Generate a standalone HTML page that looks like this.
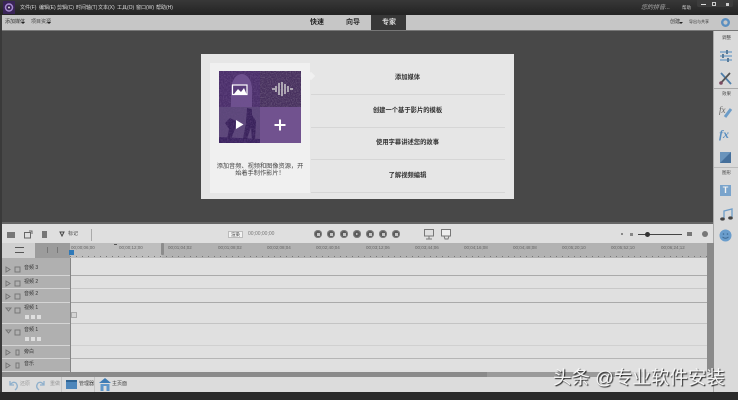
<!DOCTYPE html>
<html lang="zh-CN"><head><meta charset="utf-8"><title>Premiere Elements</title>
<style>
*{margin:0;padding:0;box-sizing:border-box}
html,body{width:738px;height:400px;overflow:hidden;background:#2a2a2a}
body{position:relative;font-family:"Liberation Sans","Noto Sans CJK SC",sans-serif}
.a{position:absolute}
svg.a{filter:blur(.35px)}
.t{position:absolute;white-space:nowrap;line-height:1;filter:blur(.35px)}
.m{font-size:5px;color:#ddd;top:6px}
.tl{font-size:5px;color:#333;left:24px}
.ru{font-size:4.5px;color:#666;top:246px}
.row{position:absolute;left:2px;width:68px;background:#b0b0b0;border-bottom:1px solid #d5d5d5}
.line{position:absolute;left:71px;width:636px;height:1px;background:#bdbdbd}
.b{position:absolute;top:230px;width:8px;height:8px;border-radius:50%;background:#5a5a5a;box-shadow:inset 0 0 0 1px #808080;filter:blur(.3px)}
.b i{position:absolute;left:2.5px;top:2.5px;width:3px;height:3px;background:#c8c8c8}
.item{position:absolute;left:310px;width:195px;text-align:center;font-size:6.3px;color:#333;font-weight:bold;filter:blur(.35px);line-height:1}
.sep{position:absolute;left:311px;width:194px;height:1px;background:#d6d6d6}
.mini{position:absolute;width:4px;height:4px;background:#dedede;filter:blur(.3px)}
</style></head><body>
<div class="a" style="left:0;top:0;width:738px;height:15px;background:linear-gradient(#383838,#232323)"></div>
<svg class="a" style="left:3px;top:1px" width="12" height="13" viewBox="0 0 12 13"><rect width="12" height="13" fill="#3a2458"/><circle cx="6" cy="6.500" r="3.500" fill="none" stroke="#a78ad0" stroke-width="1.500"/><circle cx="6" cy="6.500" r="1" fill="#ddd"/></svg>
<span class="t m" style="left:20px">文件(F)</span><span class="t m" style="left:39px">编辑(E)</span><span class="t m" style="left:57px">剪辑(C)</span><span class="t m" style="left:76px">时间轴(T)</span><span class="t m" style="left:98px">文本(X)</span><span class="t m" style="left:117px">工具(O)</span><span class="t m" style="left:136px">窗口(W)</span><span class="t m" style="left:156px">帮助(H)</span>
<span class="t" style="left:641px;top:5px;font-size:6px;font-style:italic;color:#aaa">您的拼音...</span>
<span class="t" style="left:682px;top:6px;font-size:4.500px;color:#ccc">帮助</span>
<div class="a" style="left:697px;top:0;width:36px;height:7px;background:#3c3c3c;border-radius:0 0 2px 2px"></div>
<div class="a" style="left:701px;top:4px;width:5px;height:1px;background:#ddd"></div>
<div class="a" style="left:712px;top:2px;width:4px;height:4px;border:1px solid #ccc"></div>
<div class="a" style="left:726px;top:3px;width:3px;height:3px;background:#ccc"></div>

<div class="a" style="left:2px;top:15px;width:736px;height:15px;background:#c6c6c6"></div>
<div class="a" style="left:0;top:30px;width:738px;height:1px;background:#777"></div>
<span class="t" style="left:5px;top:20px;font-size:5px;color:#333">添加媒体</span>
<div class="a" style="left:21px;top:22px;border:2px solid transparent;border-top:2px solid #222"></div>
<span class="t" style="left:31px;top:20px;font-size:5px;color:#444">项目资源</span>
<div class="a" style="left:47px;top:22px;border:2px solid transparent;border-top:2px solid #222"></div>
<span class="t" style="left:310px;top:19px;font-size:7px;font-weight:bold;color:#222">快速</span>
<span class="t" style="left:346px;top:19px;font-size:7px;font-weight:bold;color:#333">向导</span>
<div class="a" style="left:371px;top:15px;width:35px;height:15px;background:#383838"></div>
<span class="t" style="left:382px;top:19px;font-size:7px;font-weight:bold;color:#ddd">专家</span>
<span class="t" style="left:670px;top:20px;font-size:5px;color:#333">创建</span>
<div class="a" style="left:679px;top:22px;border:2px solid transparent;border-top:2px solid #222"></div>
<span class="t" style="left:689px;top:20px;font-size:4px;color:#333">导出与共享</span>
<svg class="a" style="left:720px;top:17px" width="11" height="11" viewBox="0 0 11 11"><circle cx="5.500" cy="5.500" r="3.300" fill="none" stroke="#5b8fc0" stroke-width="2.400"/></svg>

<div class="a" style="left:2px;top:31px;width:712px;height:191px;background:#484848"></div>
<div class="a" style="left:0;top:15px;width:2px;height:377px;background:#3a3a3a"></div>

<!-- dialog -->
<div class="a" style="left:201px;top:54px;width:313px;height:145px;background:#e6e6e6"></div>
<div class="a" style="left:210px;top:63px;width:100px;height:130px;background:#f0f0f0"></div>
<div class="a" style="left:308px;top:73px;width:6px;height:6px;background:#f0f0f0;transform:rotate(45deg)"></div>
<svg class="a" style="left:219px;top:71px" width="82" height="72" viewBox="0 0 82 72">
<defs><filter id="n" x="0" y="0" width="100%" height="100%"><feTurbulence type="fractalNoise" baseFrequency=".7" numOctaves="2" seed="4"/><feColorMatrix values="0 0 0 0 .15  0 0 0 0 .08  0 0 0 0 .25  1.400 0 0 0 -.5"/></filter><filter id="n2" x="0" y="0" width="100%" height="100%"><feTurbulence type="fractalNoise" baseFrequency=".8" numOctaves="2" seed="9"/><feColorMatrix values="0 0 0 0 .62  0 0 0 0 .58  0 0 0 0 .62  1.500 0 0 0 -.6"/></filter></defs>
<rect width="41" height="36" fill="#4a2e6a"/>
<path d="M12 36V16Q15 3 23 3Q31 4 33 16V36Z" fill="#6e5090"/>
<rect x="41" width="41" height="36" fill="#47305e"/>
<rect x="41" width="41" height="36" filter="url(#n2)" opacity=".4"/>
<rect y="36" width="41" height="36" fill="#5c477a"/>
<path d="M0 66L41 68V72H0Z" fill="#3b2360"/>
<path d="M6 52L11 47L17 50L16 58L12 68H8L10 58Z" fill="#38215a"/>
<path d="M28 37L33 38L33 44L37 50L36 69H33L32 56L28 68H24L27 52Z" fill="#38215a"/>
<rect width="41" height="36" filter="url(#n)"/>
<rect y="36" width="41" height="36" filter="url(#n)" opacity=".7"/>
<rect x="41" y="36" width="41" height="36" fill="#71528f"/>
<rect x="13.500" y="14" width="14.500" height="9.500" fill="#5a3d7b" stroke="#fff" stroke-width="1.200"/>
<path d="M15 23L19 18L22 21L25 17L27.500 23Z" fill="#fff"/>
<path d="M53 18H56M57 15V21M60 12V24M63 11V25M66 13V23M69 15V21M71 18H74" stroke="#b8b2bc" stroke-width="1.800"/>
<path d="M17 49L24.500 53.500L17 58Z" fill="#fff"/>
<path d="M55.500 54H66.500M61 48.500V59.500" stroke="#fff" stroke-width="2"/>
</svg>
<div class="t" style="left:215px;top:163px;width:90px;text-align:center;font-size:6.200px;line-height:7px;color:#444;white-space:normal">添加音频、视频和图像资源，开始着手制作影片！</div>
<div class="item" style="top:75px">添加媒体</div>
<div class="sep" style="top:94px"></div>
<div class="item" style="top:108px">创建一个基于影片的模板</div>
<div class="sep" style="top:127px"></div>
<div class="item" style="top:140px">使用字幕讲述您的故事</div>
<div class="sep" style="top:159px"></div>
<div class="item" style="top:173px">了解视频编辑</div>
<div class="sep" style="top:192px"></div>

<!-- right panel -->
<div class="a" style="left:713px;top:31px;width:25px;height:361px;background:#dadada;border-left:1px solid #aaa"></div>
<span class="t" style="left:722px;top:36px;font-size:4.500px;color:#444">调整</span>
<svg class="a" style="left:717px;top:49px" width="18" height="14" viewBox="0 0 18 14"><path d="M3 3H15M3 7H15M3 11H15" stroke="#6c9cc8" stroke-width="1.300"/><rect x="9" y="1" width="2" height="4" fill="#5a7d9c"/><rect x="5" y="5" width="2" height="4" fill="#5a7d9c"/><rect x="10" y="9" width="2" height="4" fill="#5a7d9c"/></svg>
<svg class="a" style="left:718px;top:71px" width="15" height="15" viewBox="0 0 15 15"><path d="M3 2L13 13" stroke="#4f7fab" stroke-width="1.800"/><path d="M12 2L2 13" stroke="#555" stroke-width="1.800"/><circle cx="3" cy="12" r="1.800" fill="#7a4a60"/></svg>
<div class="a" style="left:714px;top:88px;width:24px;height:1px;background:#aaa"></div>
<span class="t" style="left:722px;top:92px;font-size:4.500px;color:#444">效果</span>
<svg class="a" style="left:718px;top:102px" width="17" height="17" viewBox="0 0 17 17"><text x="1" y="11" font-size="9" font-style="italic" fill="#666" font-family="Liberation Serif">fx</text><path d="M7 15L13 7" stroke="#6c9cc8" stroke-width="3"/></svg>
<span class="t" style="left:719px;top:128px;font-size:12px;font-style:italic;font-family:'Liberation Serif',serif;color:#5b8fc0;font-weight:bold">fx</span>
<svg class="a" style="left:720px;top:152px" width="11" height="11" viewBox="0 0 11 11"><rect width="11" height="11" fill="#6a94bc"/><path d="M0 11L11 0V11Z" fill="#456f9b"/></svg>
<div class="a" style="left:714px;top:167px;width:24px;height:1px;background:#bbb"></div>
<span class="t" style="left:722px;top:171px;font-size:4.500px;color:#444">图形</span>
<div class="a" style="left:720px;top:185px;width:11px;height:11px;background:#7aa4cc;color:#f2f2f2;font-size:9px;line-height:11px;text-align:center;font-weight:bold;filter:blur(.3px)">T</div>
<svg class="a" style="left:719px;top:207px" width="15" height="15" viewBox="0 0 15 15"><path d="M5 12V4L13 2V10" fill="none" stroke="#6c9cc8" stroke-width="1.300"/><ellipse cx="3.500" cy="12" rx="2.300" ry="1.600" fill="#444"/><ellipse cx="11.500" cy="11" rx="2.300" ry="1.600" fill="#444"/></svg>
<svg class="a" style="left:719px;top:229px" width="13" height="13" viewBox="0 0 13 13"><circle cx="6.500" cy="6.500" r="6" fill="#6a9dcc"/><circle cx="4.500" cy="5" r=".8" fill="#3e6a94"/><circle cx="8.500" cy="5" r=".8" fill="#3e6a94"/><path d="M3.500 8Q6.500 10.500 9.500 8" stroke="#3e6a94" fill="none"/></svg>

<!-- timeline -->
<div class="a" style="left:2px;top:222px;width:711px;height:2px;background:#666"></div>
<div class="a" style="left:2px;top:224px;width:711px;height:19px;background:#dfdfdf"></div>
<svg class="a" style="left:6px;top:229px" width="50" height="10" viewBox="0 0 50 10"><rect x="1" y="3" width="8" height="6" fill="#777"/><rect x="18.500" y="3.500" width="6" height="5.500" fill="none" stroke="#666"/><path d="M23 2H26V5" stroke="#666" fill="none"/><rect x="36" y="2" width="5" height="7" fill="#777"/></svg>
<svg class="a" style="left:59px;top:231px" width="6" height="6" viewBox="0 0 6 6"><path d="M1 1H5L3 5Z" fill="none" stroke="#444"/></svg>
<span class="t" style="left:68px;top:232px;font-size:5px;color:#444">标记</span>
<div class="a" style="left:91px;top:229px;width:1px;height:12px;background:#aaa"></div>
<div class="a" style="left:228px;top:231px;width:15px;height:7px;background:#f3f3f3;border:1px solid #bbb;font-size:4.500px;line-height:5px;text-align:center;color:#333">渲染</div>
<span class="t" style="left:248px;top:232px;font-size:5px;color:#777">00;00;00;00</span>
<div class="b" style="left:314px"><i></i></div><div class="b" style="left:327px"><i></i></div><div class="b" style="left:340px"><i></i></div><div class="b" style="left:353px"><i style="clip-path:polygon(0 0,100% 50%,0 100%)"></i></div><div class="b" style="left:366px"><i></i></div><div class="b" style="left:379px"><i></i></div><div class="b" style="left:392px"><i></i></div>
<svg class="a" style="left:424px;top:229px" width="28" height="11" viewBox="0 0 28 11" fill="none" stroke="#777"><rect x=".5" y=".5" width="9" height="6.500"/><path d="M5 7V10M2 10H8"/><rect x="17.500" y=".5" width="9" height="6.500" fill="#eee"/><path d="M20 7L21 10H24L25 7"/></svg>
<div class="a" style="left:621px;top:233px;width:2px;height:2px;background:#888"></div>
<div class="a" style="left:630px;top:233px;width:3px;height:3px;background:#888"></div>
<div class="a" style="left:638px;top:234px;width:44px;height:1px;background:#444"></div>
<div class="a" style="left:645px;top:232px;width:5px;height:5px;border-radius:50%;background:#333"></div>
<div class="a" style="left:687px;top:232px;width:5px;height:4px;background:#777"></div>
<div class="a" style="left:702px;top:231px;width:6px;height:6px;border-radius:50%;background:#777"></div>

<div class="a" style="left:2px;top:243px;width:33px;height:15px;background:#d0d0d0"></div>
<div class="a" style="left:35px;top:243px;width:35px;height:15px;background:#9c9c9c"></div>
<div class="a" style="left:15px;top:247px;width:9px;height:6px;border-top:1px solid #555;border-bottom:1px solid #555"></div>
<div class="a" style="left:47px;top:247px;width:11px;height:6px;border-left:1px solid #777;border-right:1px solid #777"></div>
<div class="a" style="left:70px;top:243px;width:637px;height:15px;background:#b2b2b2"></div>
<div class="a" style="left:70px;top:243px;width:92px;height:15px;background:#bebebe"></div>
<div class="a" style="left:161px;top:243px;width:3px;height:12px;background:#8c8c8c;border-radius:1px"></div>
<div class="a" style="left:114px;top:244px;width:3px;height:1px;background:#555"></div>
<div class="a" style="left:70px;top:256px;width:637px;height:1px;background:repeating-linear-gradient(90deg,#777 0 1px,transparent 1px 6px)"></div>
<div class="a" style="left:69px;top:250px;width:5px;height:5px;background:#2f79b8"></div>
<span class="t ru" style="left:71px">00;00;06;00</span><span class="t ru" style="left:119px">00;00;12;00</span><span class="t ru" style="left:168px">00;01;04;02</span><span class="t ru" style="left:218px">00;01;08;02</span><span class="t ru" style="left:267px">00;02;08;04</span><span class="t ru" style="left:316px">00;02;40;04</span><span class="t ru" style="left:366px">00;03;12;06</span><span class="t ru" style="left:415px">00;03;44;06</span><span class="t ru" style="left:464px">00;04;16;08</span><span class="t ru" style="left:513px">00;04;48;08</span><span class="t ru" style="left:562px">00;05;20;10</span><span class="t ru" style="left:611px">00;05;52;10</span><span class="t ru" style="left:661px">00;06;24;12</span>

<div class="a" style="left:70px;top:258px;width:637px;height:114px;background:#e0e0e0"></div>
<div class="a" style="left:69px;top:258px;width:2px;height:114px;background:#858585"></div>
<div class="line" style="top:275px;background:#aaa"></div><div class="line" style="top:288px;background:#c8c8c8"></div><div class="line" style="top:302px;background:#aaa"></div><div class="line" style="top:323px;background:#c4c4c4"></div><div class="line" style="top:345px;background:#d0d0d0"></div><div class="line" style="top:358px;background:#b5b5b5"></div>
<div class="row" style="top:258px;height:18px"></div><div class="row" style="top:276px;height:13px"></div><div class="row" style="top:289px;height:14px"></div><div class="row" style="top:303px;height:21px"></div><div class="row" style="top:324px;height:22px"></div><div class="row" style="top:346px;height:13px"></div><div class="row" style="top:359px;height:13px"></div>
<span class="t tl" style="top:266px">音频 3</span><span class="t tl" style="top:280px">视频 2</span><span class="t tl" style="top:292px">音频 2</span><span class="t tl" style="top:306px">视频 1</span><span class="t tl" style="top:328px">音频 1</span><span class="t tl" style="top:350px">旁白</span><span class="t tl" style="top:362px">音乐</span>
<svg class="a" style="left:4px;top:264px" width="18" height="106" viewBox="0 0 18 106" fill="none" stroke="#777"><path d="M2 3L6 5.500L2 8ZM2 17L6 19.500L2 22ZM2 30L6 32.500L2 35ZM2 44H7L4.500 47ZM2 66H7L4.500 69ZM2 86L6 88.500L2 91ZM2 99L6 101.500L2 104Z"/><path d="M11 3H16V8H11ZM11 17H16V22H11ZM11 30H16V35H11ZM11 44H16V49H11ZM11 66H16V71H11ZM12 86H15V91H12ZM12 99H15V104H12Z"/></svg>
<div class="mini" style="left:25px;top:315px"></div><div class="mini" style="left:31px;top:315px"></div><div class="mini" style="left:37px;top:315px"></div><div class="mini" style="left:25px;top:337px"></div><div class="mini" style="left:31px;top:337px"></div><div class="mini" style="left:37px;top:337px"></div>
<div class="a" style="left:71px;top:312px;width:6px;height:6px;border:1px solid #aaa;background:#d5d5d5"></div>
<div class="a" style="left:707px;top:243px;width:7px;height:129px;background:#8a8a8a"></div>
<div class="a" style="left:2px;top:372px;width:485px;height:5px;background:#8a8a8a"></div>
<div class="a" style="left:487px;top:372px;width:128px;height:5px;background:#9a9a9a"></div>
<div class="a" style="left:615px;top:372px;width:99px;height:5px;background:#cfcfcf"></div>

<!-- bottom -->
<div class="a" style="left:2px;top:377px;width:711px;height:15px;background:#dcdcdc"></div>
<svg class="a" style="left:7px;top:379px" width="40" height="12" viewBox="0 0 40 12" fill="none" stroke="#8fb0cc" stroke-width="1.300"><path d="M3 2V6H7M3 6Q6 2 9 4Q12 8 8 11"/><path d="M37 2V6H33M37 6Q34 2 31 4Q28 8 32 11"/></svg>
<span class="t" style="left:20px;top:382px;font-size:5px;color:#999">还原</span>
<span class="t" style="left:50px;top:382px;font-size:5px;color:#999">重做</span>
<div class="a" style="left:61px;top:377px;width:1px;height:15px;background:#c4c4c4"></div>
<div class="a" style="left:66px;top:380px;width:11px;height:9px;background:#4d86bb;border-top:2px solid #2f6494"></div>
<span class="t" style="left:79px;top:382px;font-size:5px;color:#444">管理器</span>
<div class="a" style="left:94px;top:377px;width:1px;height:15px;background:#c4c4c4"></div>
<svg class="a" style="left:99px;top:378px" width="12" height="13" viewBox="0 0 12 13"><path d="M6 0L12 5H0Z" fill="#3f7cb4"/><rect x="1.500" y="6" width="9" height="7" fill="#5e96c9"/><rect x="4.500" y="8" width="3" height="5" fill="#dcdcdc"/></svg>
<span class="t" style="left:112px;top:382px;font-size:5px;color:#444">主页面</span>
<div class="a" style="left:0;top:392px;width:738px;height:8px;background:#2a2a2a"></div>

<span class="a" style="left:553px;top:367px;font-size:18.500px;line-height:22px;color:#f4f4f4;white-space:nowrap;text-shadow:1px 1px 1px #222">头条 @专业软件安装</span>
</body></html>
